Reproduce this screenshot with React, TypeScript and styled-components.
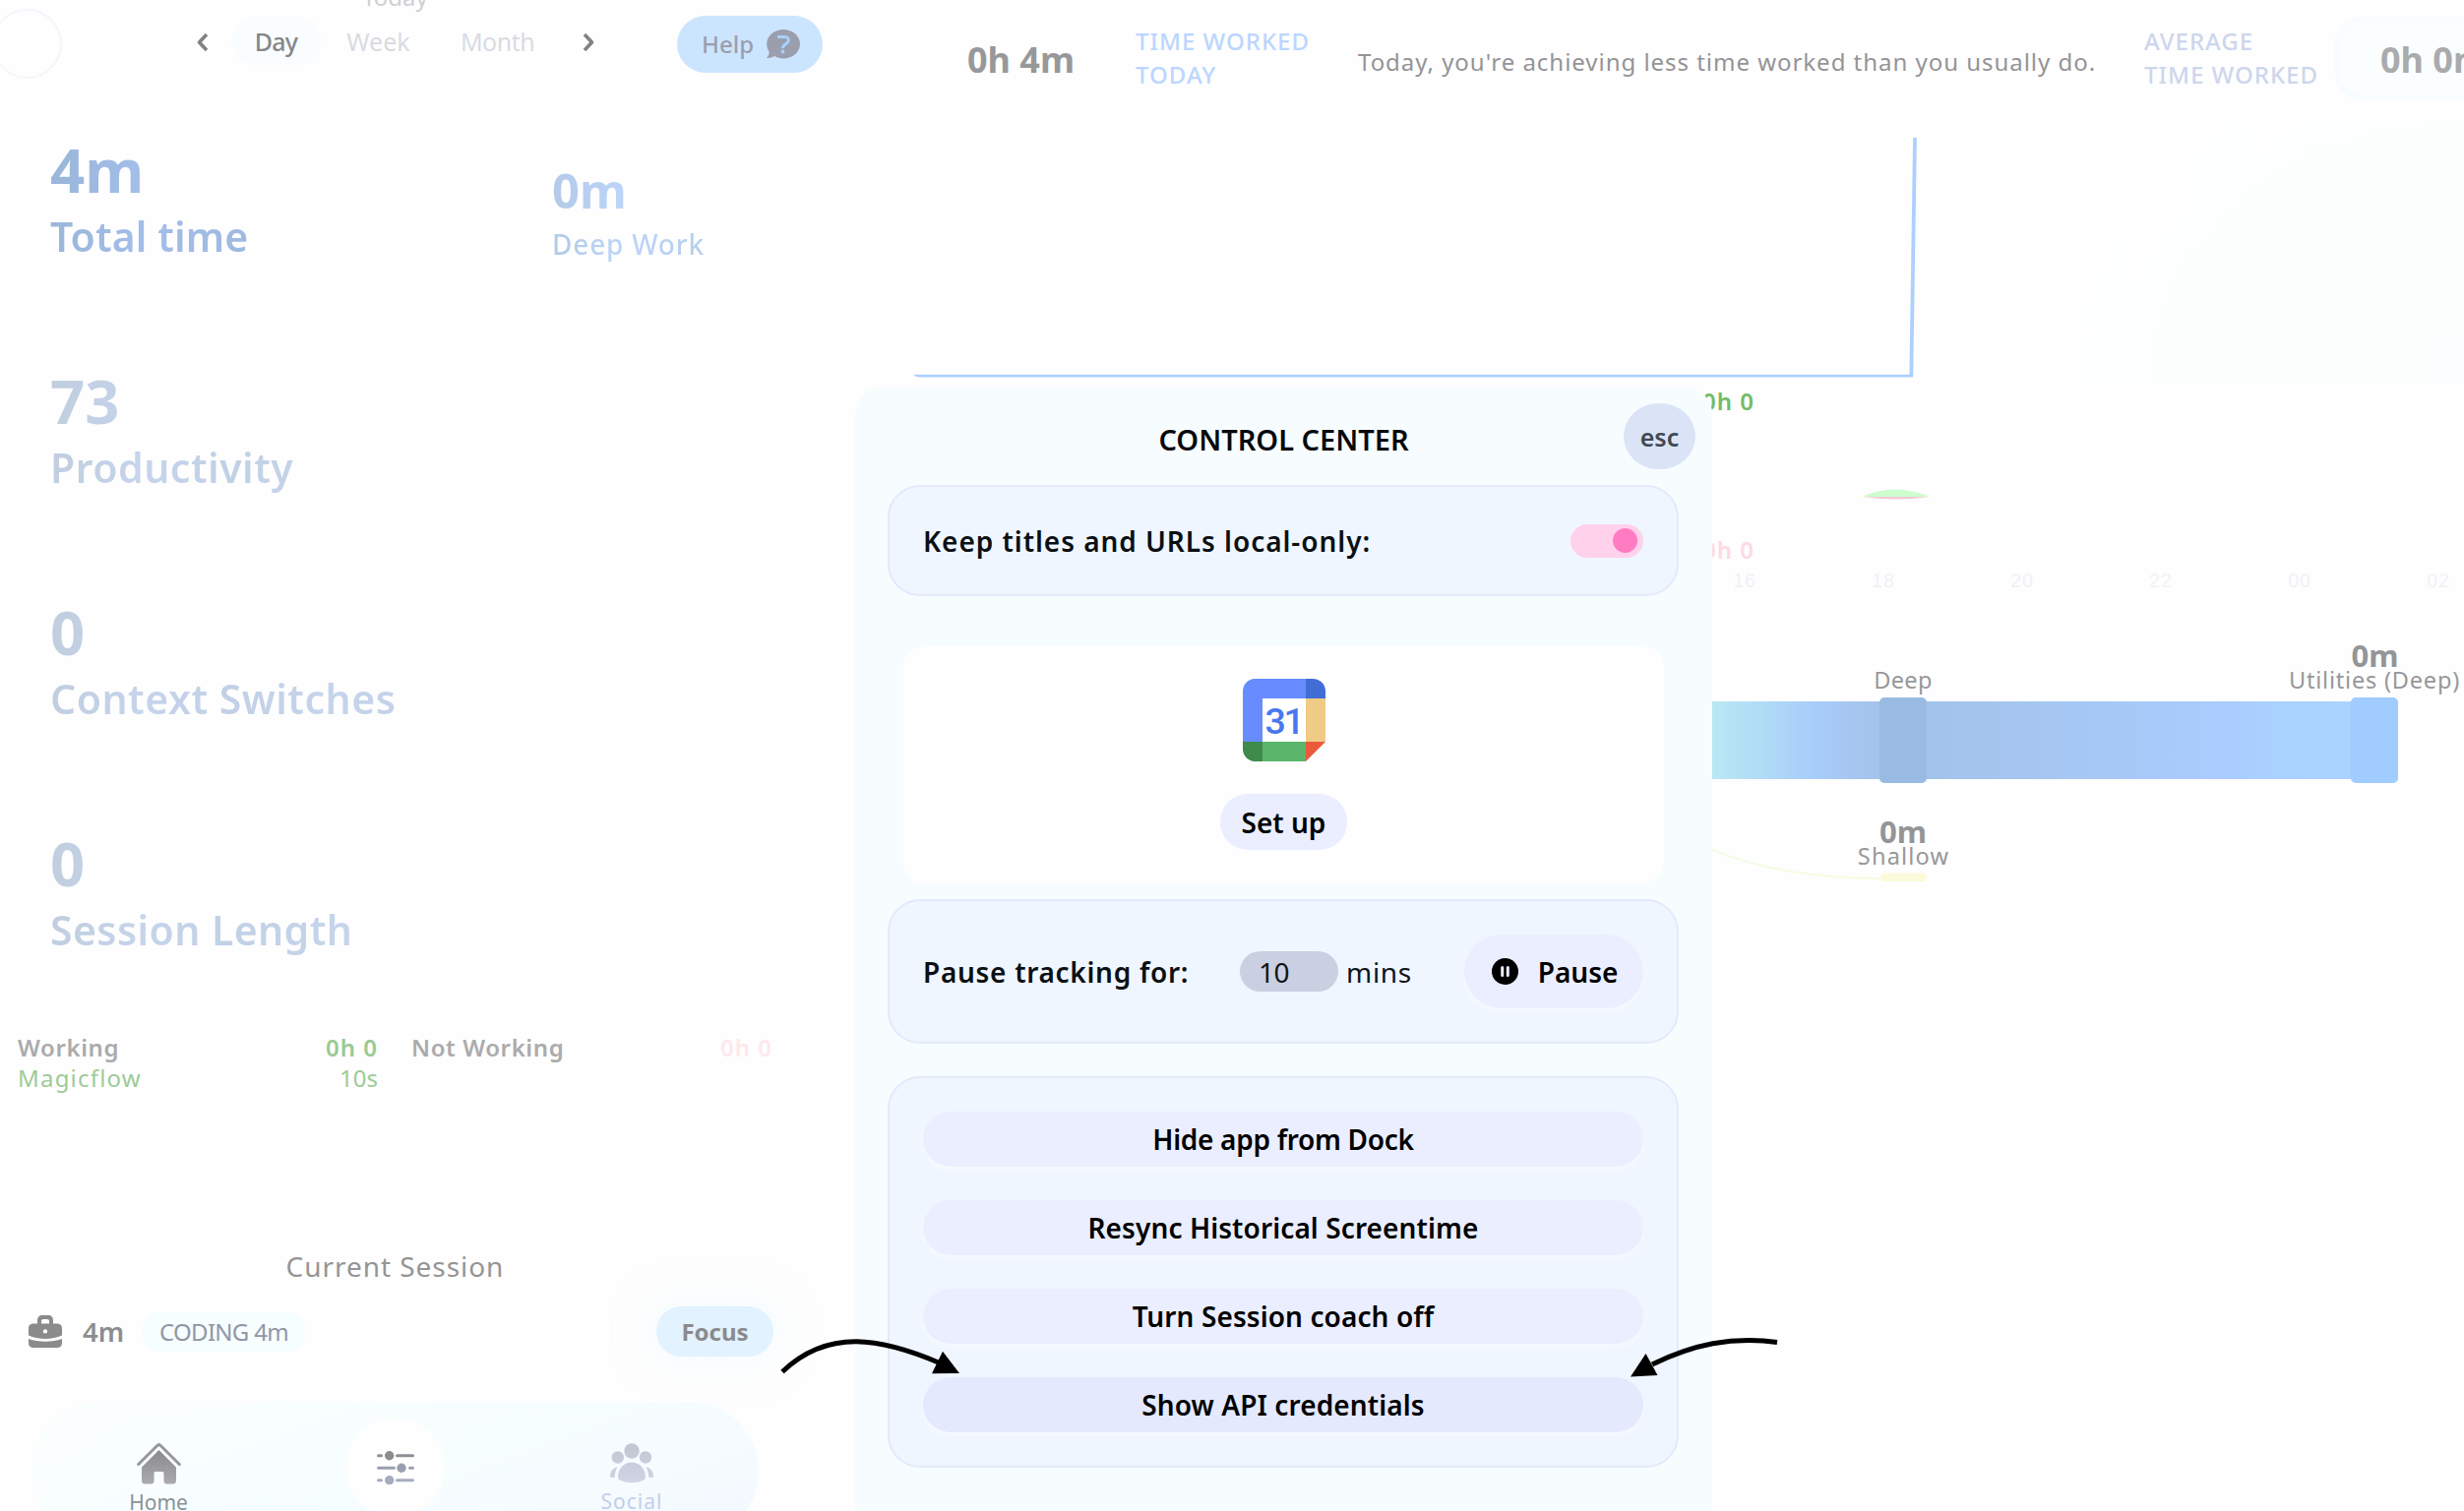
import React from 'react';
import styled, { createGlobalStyle } from 'styled-components';

const GlobalStyle = createGlobalStyle`
  * { box-sizing: border-box; }
  html, body { margin: 0; padding: 0; }
  body {
    background: #fefefe;
    font-family: "Noto Sans", "Open Sans", sans-serif;
    overflow: hidden;
  }
  button { font-family: inherit; border: 0; padding: 0; margin: 0; }
  svg { display: block; flex: none; }
`;

const Page = styled.div`
  position: relative;
  display: flex;
  width: 2504px;
  height: 1536px;
  overflow: hidden;
  background: #fefefe;
`;

/* ---------- left column ---------- */

const Sidebar = styled.aside`
  flex: none;
  width: 803px;
  display: flex;
  flex-direction: column;
`;

const DateCaption = styled.div`
  height: 24px;
  margin-top: -15px;
  font-size: 24px;
  line-height: 24px;
  text-align: center;
  color: #cfcfd2;
`;

const Controls = styled.div`
  display: flex;
  align-items: center;
  height: 71px;
`;

const Avatar = styled.div`
  flex: none;
  width: 71px;
  height: 71px;
  margin-left: -8.5px;
  border: 2px solid #f6f5fc;
  border-radius: 50%;
`;

const RangePicker = styled.nav`
  flex: none;
  display: flex;
  align-items: center;
  height: 49px;
  margin: -6px 0 0 137px;
`;

const RangeTab = styled.span<{ $width: number; $active?: boolean; $track?: number }>`
  width: ${(p) => p.$width}px;
  height: 49px;
  border-radius: 25px;
  text-align: center;
  font-size: 25px;
  line-height: 51px;
  font-weight: ${(p) => (p.$active ? 500 : 400)};
  letter-spacing: ${(p) => p.$track ?? 0}px;
  color: ${(p) => (p.$active ? '#858789' : '#d9dbe2')};
  background: ${(p) => (p.$active ? '#f9fdff' : 'transparent')};
`;

const ChevronSlot = styled.span<{ $before: number; $after: number }>`
  display: flex;
  margin: 2px ${(p) => p.$after}px 0 ${(p) => p.$before}px;
`;

const HelpButton = styled.button`
  display: flex;
  flex: none;
  align-items: center;
  justify-content: center;
  gap: 13px;
  width: 148px;
  height: 58px;
  margin-left: 84px;
  border-radius: 29px;
  background: #cce5ff;
  color: #9a9faf;
  font-size: 24px;
  font-weight: 500;
  padding-left: 3px;
`;

const Stats = styled.section`
  display: flex;
  flex-direction: column;
  gap: 111px;
  padding: 61px 0 0 51px;
`;

const StatRow = styled.div`
  display: grid;
  grid-template-columns: 510px 1fr;
  align-items: start;
  height: 124px;
`;

const Stat = styled.div<{ $tint: string; $minor?: boolean }>`
  padding: ${(p) => (p.$minor ? 27 : 0)}px 0 14px;
  color: transparent;
  background: ${(p) => p.$tint};
  background-clip: text;
  -webkit-background-clip: text;
`;

const StatValue = styled.div<{ $minor?: boolean }>`
  font-weight: 700;
  font-size: ${(p) => (p.$minor ? 49 : 61.6)}px;
  line-height: ${(p) => (p.$minor ? 50 : 62)}px;
`;

const StatLabel = styled.div<{ $minor?: boolean; $track?: number }>`
  margin-top: ${(p) => (p.$minor ? 13 : 12)}px;
  font-weight: ${(p) => (p.$minor ? 500 : 600)};
  font-size: ${(p) => (p.$minor ? 28 : 41)}px;
  line-height: ${(p) => (p.$minor ? 34 : 50)}px;
  letter-spacing: ${(p) => p.$track ?? 0}px;
  white-space: nowrap;
`;

const Summary = styled.section`
  display: grid;
  grid-template-columns: 366px 367px;
  column-gap: 34px;
  margin: 79px 0 0 18px;
  height: 62px;
`;

const SummaryLine = styled.div`
  display: flex;
  justify-content: space-between;
  font-size: 24px;
  line-height: 31px;
`;

const SummaryText = styled.span<{ $color: string; $bold?: boolean; $track?: number }>`
  color: ${(p) => p.$color};
  font-weight: ${(p) => (p.$bold ? 600 : 400)};
  letter-spacing: ${(p) => p.$track ?? 0}px;
`;

const SessionTitle = styled.h2`
  margin: 158px 0 0;
  font-weight: 400;
  font-size: 28px;
  line-height: 36px;
  letter-spacing: 0.95px;
  text-align: center;
  color: #959595;
`;

const SessionRow = styled.div`
  display: flex;
  align-items: center;
  height: 51px;
  margin-top: 23px;
  padding: 0 17px 0 29px;
`;

const SessionTime = styled.span`
  width: 44px;
  margin-left: 21px;
  font-size: 27.5px;
  font-weight: 600;
  color: #8b8d8f;
`;

const Tag = styled.span`
  width: 165px;
  height: 40px;
  margin-left: 17px;
  border-radius: 16px;
  background: #f6feff;
  color: #9296a5;
  font-size: 24px;
  line-height: 40px;
  letter-spacing: -0.7px;
  text-align: center;
`;

const FocusButton = styled.button`
  width: 119px;
  height: 51px;
  margin-left: auto;
  border-radius: 26px;
  background: #e2f2ff;
  color: #8a8a8d;
  font-size: 24px;
  font-weight: 700;
  box-shadow: 0 0 34px 8px rgba(240, 252, 255, 0.5);
`;

const BottomNav = styled.nav`
  display: flex;
  justify-content: center;
  flex: none;
  width: 739px;
  height: 140px;
  margin: 46px 0 0 32px;
  border-radius: 70px;
  background: linear-gradient(160deg, #fbfeff 0%, #f7feff 50%, #f3f8ff 100%);
`;

const NavItem = styled.div<{ $color: string }>`
  display: flex;
  flex-direction: column;
  align-items: center;
  width: 240.5px;
  padding-top: 42px;
  gap: 4px;
  color: ${(p) => p.$color};
`;

const NavLabel = styled.span<{ $track: number }>`
  font-size: 21px;
  line-height: 28px;
  letter-spacing: ${(p) => p.$track}px;
`;

const NavCenter = styled.div`
  display: flex;
  justify-content: center;
  width: 240.5px;
  padding-top: 16px;
`;

const NavCircle = styled.div`
  display: flex;
  align-items: center;
  justify-content: center;
  width: 101px;
  height: 101px;
  border-radius: 50%;
  background: #fefefe;
`;

/* ---------- right column ---------- */

const Main = styled.main`
  flex: none;
  width: 1578px;
  margin-left: 123px;
  display: flex;
  flex-direction: column;
`;

const WorkedBar = styled.header`
  display: grid;
  grid-template-columns: 171px 226px 799px 194px 200px;
  align-items: center;
  height: 118px;
  padding-left: 57px;
  overflow: hidden;
`;

const WorkedValue = styled.span`
  padding-top: 3px;
  font-size: 36px;
  font-weight: 700;
  line-height: 50px;
  color: #97989a;
  white-space: nowrap;
`;

const WorkedLabel = styled.span<{ $color: string }>`
  font-size: 24px;
  line-height: 34px;
  font-weight: 500;
  letter-spacing: 1px;
  white-space: pre;
  color: ${(p) => p.$color};
`;

const WorkedMessage = styled.span`
  padding-top: 8px;
  font-size: 24px;
  line-height: 34px;
  letter-spacing: 0.97px;
  color: #949496;
  white-space: nowrap;
`;

const AverageBox = styled.div`
  display: flex;
  align-items: center;
  width: 200px;
  height: 84px;
  padding-left: 46px;
  border-radius: 26px;
  background: #fbfeff;
  box-shadow: inset 0 0 14px #f4fbff;
  ${WorkedValue} { color: #a9abac; }
`;

const ChartArea = styled.div`
  background: radial-gradient(ellipse 500px 420px at 100% 100%, #fbfefe 0%, #fefefe 100%);
`;

/* ---------- control center ---------- */

const Modal = styled.div`
  position: absolute;
  left: 869px;
  top: 393px;
  bottom: 0;
  width: 871px;
  border-radius: 28px 28px 0 0;
  background: #f7fcff;
`;

const ModalHeader = styled.div`
  display: grid;
  grid-template-columns: 73px 1fr 73px;
  height: 100px;
  padding: 17px 17px 0;
`;

const ModalTitle = styled.h1`
  grid-column: 2;
  margin: 0;
  font-size: 29px;
  font-weight: 600;
  line-height: 74px;
  text-align: center;
  color: #06090c;
`;

const EscButton = styled.button`
  width: 73px;
  height: 67px;
  border-radius: 36px / 34px;
  background: #dbe4f6;
  color: #424953;
  font-size: 25px;
  font-weight: 600;
  line-height: 64px;
`;

const ModalBody = styled.div`
  display: flex;
  flex-direction: column;
  padding: 0 34px 0 33px;
`;

const Card = styled.section<{ $height: number; $top?: number }>`
  display: flex;
  align-items: center;
  height: ${(p) => p.$height}px;
  margin-top: ${(p) => p.$top ?? 0}px;
  padding: 0 34px;
  border: 2px solid #e2eafb;
  border-radius: 33px;
  background: #f0f6ff;
`;

const ActionCard = styled(Card)`
  flex-direction: column;
  align-items: stretch;
  justify-content: flex-start;
  gap: 34px;
  padding-top: 34px;
`;

const CardLabel = styled.span<{ $track: number }>`
  font-size: 28px;
  font-weight: 600;
  letter-spacing: ${(p) => p.$track}px;
  white-space: nowrap;
  color: #0b1014;
`;

const Toggle = styled.span`
  display: flex;
  justify-content: flex-end;
  width: 74px;
  height: 34px;
  margin-left: auto;
  padding: 4px 6px 0 0;
  border-radius: 17px;
  background: #ffd1ea;
`;

const ToggleKnob = styled.span`
  width: 25px;
  height: 25px;
  border-radius: 50%;
  background: #ff7cc3;
`;

const CalendarCard = styled.section`
  display: flex;
  flex-direction: column;
  align-items: center;
  gap: 33px;
  height: 241px;
  margin: 51px 15px 0 16px;
  padding-top: 33px;
  border-radius: 22px;
  background: #fefefe;
`;

const ActionButton = styled.button<{ $strong?: boolean; $track?: number }>`
  flex: none;
  height: 56px;
  border-radius: 28px;
  background: ${(p) => (p.$strong ? '#e4e9fe' : '#ebeeff')};
  box-shadow: 0 4px 5px rgba(246, 249, 255, 0.9);
  color: #000;
  font-size: 28px;
  font-weight: 600;
  line-height: 56px;
  letter-spacing: ${(p) => p.$track ?? 0}px;
  white-space: nowrap;
`;

const SetupButton = styled(ActionButton)`
  width: 129px;
  height: 57px;
  box-shadow: none;
`;

const MinutesInput = styled.span`
  width: 100px;
  height: 41px;
  padding-left: 19px;
  margin-left: auto;
  border-radius: 21px;
  background: #cacfe2;
  color: #0f1418;
  font-size: 28px;
  line-height: 42px;
  letter-spacing: -0.5px;
`;

const Minutes = styled.span`
  width: 120px;
  margin-left: 8px;
  font-size: 28px;
  letter-spacing: 0.7px;
  color: #0f1418;
`;

const PauseButton = styled(ActionButton)`
  display: flex;
  align-items: center;
  justify-content: center;
  gap: 20px;
  width: 182px;
  height: 75px;
  padding-left: 2px;
  border-radius: 38px;
`;

const Arrows = styled.svg`
  position: absolute;
  left: 780px;
  top: 1340px;
`;

/* ---------- drawings ---------- */

const Chevron = ({ flip }: { flip?: boolean }) => (
  <svg width="12" height="20" viewBox="0 0 12 20">
    <path
      d={flip ? 'M2 2l7.5 8L2 18' : 'M10 2L2.5 10l7.5 8'}
      fill="none" stroke="#808285" strokeWidth="3.6" strokeLinejoin="round"
    />
  </svg>
);

const HelpIcon = () => (
  <svg width="34" height="30" viewBox="0 0 34 30">
    <path d="M17.200 0C26.500 0 34 6.500 34 14.800S26.500 29.500 17.200 29.500c-3.400 0-6.500-.9-9.100-2.400C5.800 28.600 3 29.200 0 29c1.700-2 2.700-4 2.800-6.200C1.100 20.500.2 17.800.2 14.800.2 6.500 7.800 0 17.200 0z" fill="#9a9ead" />
    <path d="M11 7.500h7.500c3.200 0 4 1.500 3.600 4.300-.5 3.300-5.800 2.800-5.700 7.400" fill="none" stroke="#a9d0fb" strokeWidth="3" />
    <rect x="14.600" y="20.800" width="3.700" height="3.500" rx="1.200" fill="#a9d0fb" />
  </svg>
);

const Briefcase = () => (
  <svg width="34" height="33" viewBox="0 0 34 33" fill="#8b8b8c">
    <path fillRule="evenodd" d="M9 8.500V5.500C9 2 10.800 0 14 0h6c3.200 0 5 2 5 5.500v3h3.500c3.500 0 5.500 1.800 5.500 5V20.500c-10 4.500-24 4.500-34 0V13.500c0-3.200 2-5 5.500-5zM13 8.500h8V6.300c0-1.500-.7-2.300-2.200-2.300h-3.600C13.700 4 13 4.800 13 6.300zM17 14.200a2.200 2.200 0 1 0 .01 0z" />
    <path d="M0 24c10 3.600 24 3.600 34 0v4c0 3.200-1.800 5-5 5H5c-3.200 0-5-1.800-5-5z" />
  </svg>
);

const HomeIcon = () => (
  <svg width="45" height="42" viewBox="0 0 45 42">
    <defs>
      <linearGradient id="home" x1="0" y1="0" x2="0" y2="1">
        <stop offset="0" stopColor="#8a8a8c" />
        <stop offset="1" stopColor="#ababaf" />
      </linearGradient>
    </defs>
    <path d="M1.700 21.500L20.500 2.700q2-2 4 0L43.300 21.500" fill="none" stroke="#97979a" strokeWidth="3" strokeLinecap="round" />
    <path d="M22.500 7L40 24.500V38c0 2.500-1 3.500-3.500 3.500h-6c-2 0-3-1-3-3V31c0-1.500-.6-2-2-2h-6c-1.400 0-2 .5-2 2v7.500c0 2-1 3-3 3h-6C6 41.500 5 40.500 5 38V24.500z" fill="url(#home)" />
  </svg>
);

const SlidersIcon = () => (
  <svg width="38" height="34" viewBox="0 0 38 34" strokeWidth="3" strokeLinecap="round">
    <g stroke="#8d8f95" fill="#8a8c8e">
      <path d="M1.500 4.700h3M20.500 4.700h16" />
      <circle cx="12.700" cy="4.700" r="4.700" stroke="none" />
    </g>
    <g stroke="#9a9fb0" fill="#9a9fb0">
      <path d="M1.500 17.200h16M33.500 17.200h3" />
      <circle cx="25" cy="17.200" r="4.700" stroke="none" />
    </g>
    <g stroke="#a6acc0" fill="#a6acc0">
      <path d="M1.500 29.700h3M20.500 29.700h16" />
      <circle cx="12.700" cy="29.700" r="4.700" stroke="none" />
    </g>
  </svg>
);

const SocialIcon = () => (
  <svg width="44" height="41" viewBox="0 0 44 41">
    <defs>
      <linearGradient id="social" x1="0" y1="0" x2="0" y2="41" gradientUnits="userSpaceOnUse">
        <stop offset="0" stopColor="#c3c5d0" />
        <stop offset="1" stopColor="#d0d5e7" />
      </linearGradient>
    </defs>
    <g fill="url(#social)">
      <circle cx="22" cy="8" r="7.700" />
      <circle cx="7.800" cy="14.500" r="6.200" />
      <circle cx="36" cy="14.500" r="6.200" />
      <path d="M8 34.500C8 26 14 19.500 22 19.500S36 26 36 34.500c0 2-1.200 2.800-3 3.600-6.500 3-15.500 3-22 0-1.800-.8-3-1.600-3-3.600z" />
      <path d="M7.500 24.300C3.500 25 0 28.500 0 33.500c0 1.200.4 1.500 1.200 1.500h3.500c.2-4.500 1-8 2.800-10.700z" />
      <path d="M36.500 24.300c4 .7 7.500 4.200 7.500 9.200 0 1.200-.4 1.500-1.200 1.500h-3.500c-.2-4.500-1-8-2.800-10.700z" />
    </g>
  </svg>
);

const CalendarIcon = () => (
  <svg width="84" height="84" viewBox="0 0 84 84">
    <path d="M20 64V20h44V0H13C5.500 0 0 5.500 0 13v51z" fill="#688cff" />
    <path d="M64 0h7c7.500 0 13 5.500 13 13v7H64z" fill="#416dd6" />
    <rect x="64" y="20" width="20" height="44" fill="#f0ca87" />
    <rect x="20" y="64" width="44" height="20" fill="#5bb56b" />
    <path d="M0 64h20v20h-7C5.500 84 0 78.500 0 71z" fill="#3e8b4b" />
    <path d="M64 64h20L64 84z" fill="#eb5a3a" />
    <rect x="20" y="20" width="44" height="44" fill="#fff" />
    <text x="41.500" y="56" textAnchor="middle" fontFamily="Roboto" fontSize="37.500" fontWeight="500" letterSpacing="-2.200" fill="#4878ef">31</text>
  </svg>
);

const PauseIcon = () => (
  <svg width="27" height="27" viewBox="0 0 27 27">
    <circle cx="13.500" cy="13.500" r="13.500" />
    <path d="M10.700 9.500v8M16.300 9.500v8" stroke="#ebeeff" strokeWidth="3" strokeLinecap="round" />
  </svg>
);

const WorkedChart = () => (
  <svg width="1578" height="272" viewBox="926 118 1578 272">
    <path d="M928 380.700h1016v2.800H935q-4 0-7-2.800z" fill="#add0ff" />
    <path d="M1942.300 383L1946 140" fill="none" stroke="#add0ff" strokeWidth="3.800" />
  </svg>
);

const HOURS = ['16', '18', '20', '22', '00', '02'];

const Timeline = () => (
  <svg width="1578" height="215" viewBox="926 390 1578 215">
    <g fontSize="24" fontWeight="600" letterSpacing="1" textAnchor="end">
      <text x="1783" y="417" fill="#72bb66">0h 0</text>
      <text x="1783" y="568" fill="#ffd9e3">0h 0</text>
    </g>
    <path d="M1892 505q34-15 69 0z" fill="#cefdce" />
    <path d="M1894 505h66q-33 5-66 0z" fill="#f3c8d6" />
    <g fontFamily="Liberation Sans" fontSize="19.500" letterSpacing="1" textAnchor="middle" fill="#f0f1f8">
      {HOURS.map((h, i) => (
        <text key={h} x={1773 + i * 141} y="597">{h}</text>
      ))}
    </g>
  </svg>
);

const FlowChart = () => (
  <svg width="1578" height="310" viewBox="926 605 1578 310">
    <defs>
      <linearGradient id="flowA" x1="1740" x2="1910" y1="0" y2="0" gradientUnits="userSpaceOnUse">
        <stop offset="0" stopColor="#b9e8f4" />
        <stop offset="0.25" stopColor="#b1def5" />
        <stop offset="0.62" stopColor="#a8ccfa" />
        <stop offset="1" stopColor="#a4c2ea" />
      </linearGradient>
      <linearGradient id="flowB" x1="1958" x2="2389" y1="0" y2="0" gradientUnits="userSpaceOnUse">
        <stop offset="0" stopColor="#a2c3e9" />
        <stop offset="0.72" stopColor="#aaccff" />
        <stop offset="0.8" stopColor="#aad1ff" />
        <stop offset="1" stopColor="#aad4ff" />
      </linearGradient>
      <linearGradient id="flowC" x1="1740" x2="1910" y1="0" y2="0" gradientUnits="userSpaceOnUse">
        <stop offset="0" stopColor="#effee6" />
        <stop offset="1" stopColor="#fafbdc" />
      </linearGradient>
    </defs>
    <rect x="1700" y="713" width="212" height="79" fill="url(#flowA)" />
    <rect x="1956" y="713" width="435" height="79" fill="url(#flowB)" />
    <path d="M1740 864Q1812 893 1912 893" fill="none" stroke="url(#flowC)" strokeWidth="2" />
    <rect x="1910" y="709" width="48" height="87" rx="5" fill="#99bbe3" />
    <rect x="2389" y="709" width="48" height="87" rx="5" fill="#a0ccff" />
    <rect x="1911" y="887.500" width="47" height="8.500" rx="4" fill="#fbfada" />
    <g textAnchor="middle" fill="#97989a">
      <text x="1934" y="700" fontSize="23.500" letterSpacing="0.300">Deep</text>
      <text x="2413" y="700" fontSize="23.500" letterSpacing="0.800">Utilities (Deep)</text>
      <text x="1934.500" y="879" fontSize="23.500" letterSpacing="1.200">Shallow</text>
      <g fontSize="31" fontWeight="700" fill="#949596">
        <text x="2413.500" y="678">0m</text>
        <text x="1934" y="857">0m</text>
      </g>
    </g>
  </svg>
);

const PALE = 'linear-gradient(90deg, #c0cedf 0%, #c6d4ec 18%, #c1d1e5 36%, #c6d4eb 55%, #c1d1e6 100%)';
const STRONG = 'linear-gradient(90deg, #9ab6d8 0, #a2beea 90px, #9fb9e0 200px)';
const LIGHT = 'linear-gradient(90deg, #b3cae8 0, #bcd4f8 70px, #b8d0ee 150px)';

export default function App() {
  return (
    <>
      <GlobalStyle />
      <Page>
        <Sidebar>
          <DateCaption>Today</DateCaption>
          <Controls>
            <Avatar />
            <RangePicker>
              <ChevronSlot $before={0} $after={23}><Chevron /></ChevronSlot>
              <RangeTab $width={92} $active $track={-0.8}>Day</RangeTab>
              <RangeTab $width={116}>Week</RangeTab>
              <RangeTab $width={126} $track={-0.5}>Month</RangeTab>
              <ChevronSlot $before={23} $after={0}><Chevron flip /></ChevronSlot>
            </RangePicker>
            <HelpButton>Help<HelpIcon /></HelpButton>
          </Controls>

          <Stats>
            <StatRow>
              <Stat $tint={STRONG}>
                <StatValue>4m</StatValue>
                <StatLabel $track={0.1}>Total time</StatLabel>
              </Stat>
              <Stat $tint={LIGHT} $minor>
                <StatValue $minor>0m</StatValue>
                <StatLabel $minor $track={0.8}>Deep Work</StatLabel>
              </Stat>
            </StatRow>
            <StatRow>
              <Stat $tint={PALE}>
                <StatValue>73</StatValue>
                <StatLabel $track={0.5}>Productivity</StatLabel>
              </Stat>
            </StatRow>
            <StatRow>
              <Stat $tint={PALE}>
                <StatValue>0</StatValue>
                <StatLabel $track={0.5}>Context Switches</StatLabel>
              </Stat>
            </StatRow>
            <StatRow>
              <Stat $tint={PALE}>
                <StatValue>0</StatValue>
                <StatLabel $track={0.4}>Session Length</StatLabel>
              </Stat>
            </StatRow>
          </Stats>

          <Summary>
            <div>
              <SummaryLine>
                <SummaryText $color="#ababad" $bold $track={0.6}>Working</SummaryText>
                <SummaryText $color="#99ca93" $bold $track={1}>0h 0</SummaryText>
              </SummaryLine>
              <SummaryLine>
                <SummaryText $color="#9dcb97" $track={1.2}>Magicflow</SummaryText>
                <SummaryText $color="#9dcb97">10s</SummaryText>
              </SummaryLine>
            </div>
            <div>
              <SummaryLine>
                <SummaryText $color="#ababad" $bold $track={0.6}>Not Working</SummaryText>
                <SummaryText $color="#ffe8ec" $bold $track={1}>0h 0</SummaryText>
              </SummaryLine>
            </div>
          </Summary>

          <SessionTitle>Current Session</SessionTitle>
          <SessionRow>
            <Briefcase />
            <SessionTime>4m</SessionTime>
            <Tag>CODING 4m</Tag>
            <FocusButton>Focus</FocusButton>
          </SessionRow>

          <BottomNav>
            <NavItem $color="#8a9297">
              <HomeIcon />
              <NavLabel $track={0}>Home</NavLabel>
            </NavItem>
            <NavCenter>
              <NavCircle><SlidersIcon /></NavCircle>
            </NavCenter>
            <NavItem $color="#c3cfe9">
              <SocialIcon />
              <NavLabel $track={1}>Social</NavLabel>
            </NavItem>
          </BottomNav>
        </Sidebar>

        <Main>
          <WorkedBar>
            <WorkedValue>0h 4m</WorkedValue>
            <WorkedLabel $color="#bbd6ff">{'TIME WORKED\nTODAY'}</WorkedLabel>
            <WorkedMessage>Today, you're achieving less time worked than you usually do.</WorkedMessage>
            <WorkedLabel $color="#ccd6ec">{'AVERAGE\nTIME WORKED'}</WorkedLabel>
            <AverageBox><WorkedValue>0h 0m</WorkedValue></AverageBox>
          </WorkedBar>
          <ChartArea><WorkedChart /></ChartArea>
          <Timeline />
          <FlowChart />
        </Main>

        <Modal>
          <ModalHeader>
            <ModalTitle>CONTROL CENTER</ModalTitle>
            <EscButton>esc</EscButton>
          </ModalHeader>
          <ModalBody>
            <Card $height={113}>
              <CardLabel $track={0.95}>Keep titles and URLs local-only:</CardLabel>
              <Toggle><ToggleKnob /></Toggle>
            </Card>
            <CalendarCard>
              <CalendarIcon />
              <SetupButton>Set up</SetupButton>
            </CalendarCard>
            <Card $height={147} $top={16}>
              <CardLabel $track={0.7}>Pause tracking for:</CardLabel>
              <MinutesInput>10</MinutesInput>
              <Minutes>mins</Minutes>
              <PauseButton><PauseIcon />Pause</PauseButton>
            </Card>
            <ActionCard $height={398} $top={33}>
              <ActionButton $track={-0.3}>Hide app from Dock</ActionButton>
              <ActionButton $track={0.1}>Resync Historical Screentime</ActionButton>
              <ActionButton $track={0.1}>Turn Session coach off</ActionButton>
              <ActionButton $track={0.1} $strong>Show API credentials</ActionButton>
            </ActionCard>
          </ModalBody>
        </Modal>

        <Arrows width="1050" height="80" viewBox="780 1340 1050 80">
          <path d="M795 1394.500C842 1350 895 1360 956 1386" fill="none" stroke="#000" strokeWidth="5" />
          <path d="M975 1396l-28 .3 11-22.500z" />
          <path d="M1806 1364.500C1760 1358 1720 1367 1679 1387" fill="none" stroke="#000" strokeWidth="5" />
          <path d="M1657 1399.500l15.500-23.500 12 22z" />
        </Arrows>
      </Page>
    </>
  );
}
